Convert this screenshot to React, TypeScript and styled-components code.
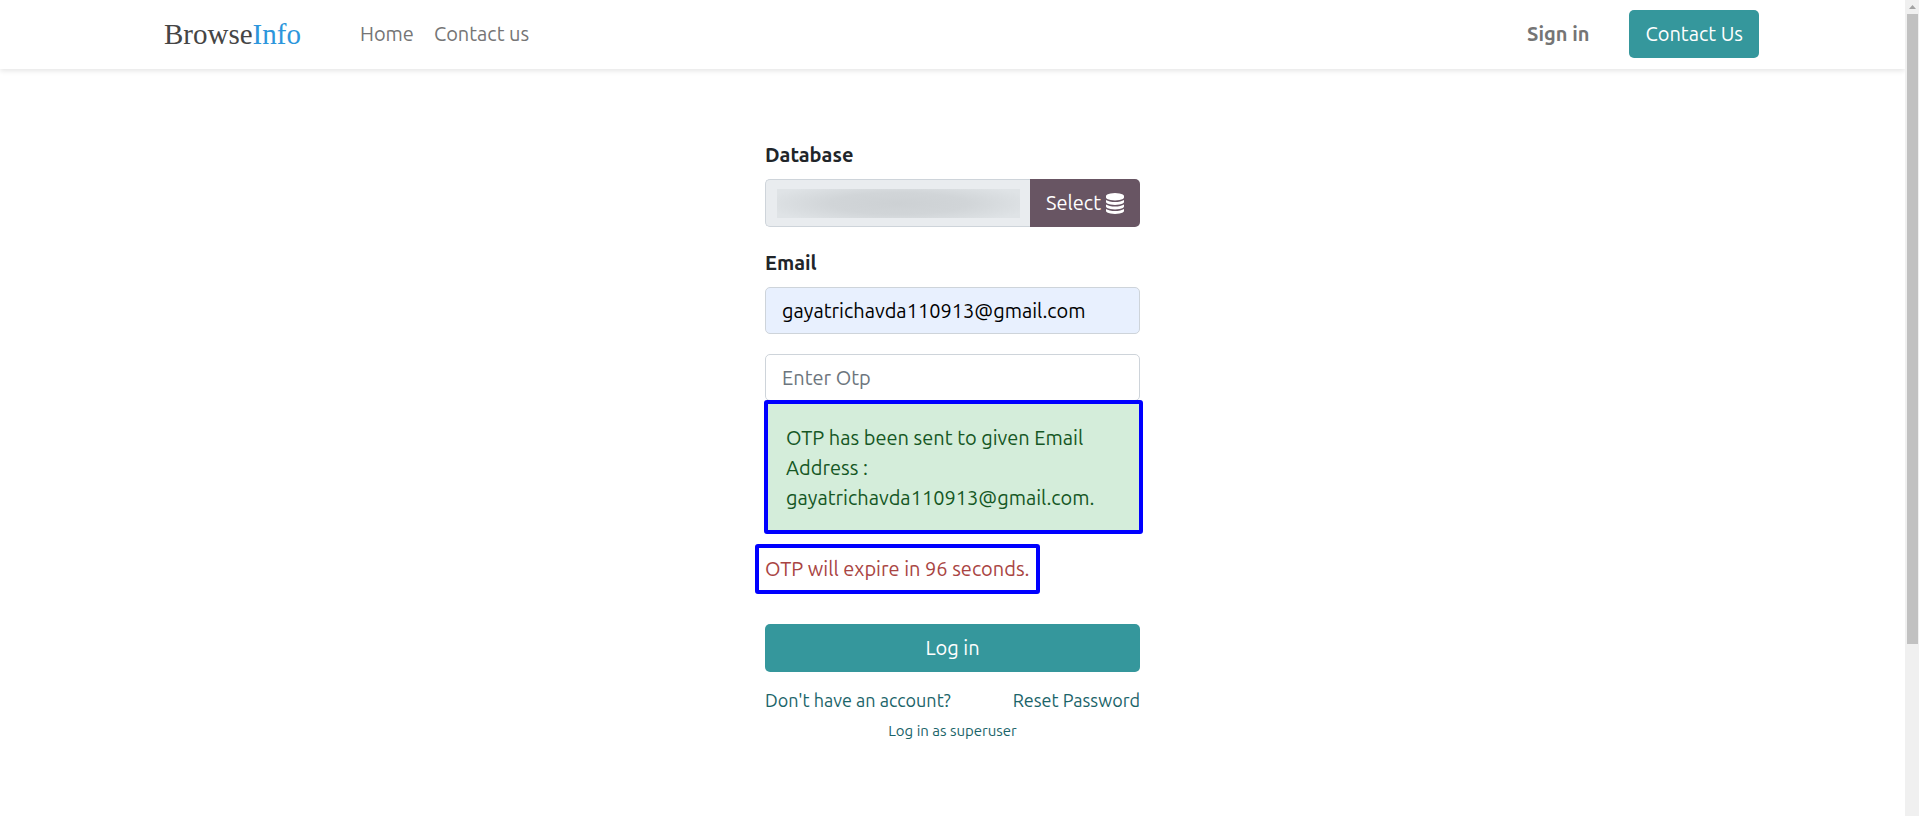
import React, { useState } from "react";
import styled, { createGlobalStyle, css } from "styled-components";

const color = {
  teal: "#35979c",
  tealDark: "#1a6469",
  plum: "#685563",
  border: "#ced4da",
  mark: "#0000ff",
};

const GlobalStyle = createGlobalStyle`
  *, *::before, *::after { box-sizing: border-box; }
  body {
    margin: 0;
    background: #fff;
    color: #212529;
    font: 400 20px/30px "Ubuntu", "Noto Sans", sans-serif;
  }
  button, input { font: inherit; }
`;

const Shell = styled.div`
  display: flex;
  min-height: 100vh;
`;

const Page = styled.div`
  flex: 1;
  min-width: 0;
`;

const Header = styled.header`
  padding: 10px 24px 11px;
  background: #fff;
  box-shadow: 0 2px 5px rgba(0, 0, 0, 0.1);
`;

const HeaderInner = styled.div`
  display: flex;
  align-items: center;
  max-width: 1613px;
  margin: 0 auto;
`;

const Brand = styled.a`
  margin: 0 59px 0 18px;
  color: #454545;
  font: 400 29px/48px "Liberation Serif", serif;
  text-decoration: none;

  span { color: #2d96dc; }
`;

const Nav = styled.nav`
  display: flex;
  flex: 1;
  gap: 20px;
`;

const NavLink = styled.a<{ $strong?: boolean }>`
  color: #757575;
  font-weight: ${(p) => (p.$strong ? 700 : 400)};
  text-decoration: none;
  white-space: nowrap;
`;

const solid = css`
  border: 0;
  border-radius: 5px;
  padding: 9px 16px;
  background: ${color.teal};
  color: #fff;
  text-decoration: none;
  cursor: pointer;
`;

const ContactLink = styled.a`
  ${solid}
  margin-left: 40px;
  white-space: nowrap;
`;

const LoginForm = styled.form`
  width: 375px;
  max-width: calc(100% - 32px);
  margin: 70px auto 40px;
`;

const Field = styled.div`
  margin-bottom: 20px;
`;

const Label = styled.label`
  display: block;
  margin-bottom: 8px;
  font-weight: 700;
  line-height: 32px;
`;

const TextInput = styled.input<{ $filled?: boolean }>`
  display: block;
  width: 100%;
  height: 47px;
  padding: 8px 16px;
  border: 1px solid ${color.border};
  border-radius: 5px;
  background: ${(p) => (p.$filled ? "#e8f0fe" : "#fff")};
  color: ${(p) => (p.$filled ? "#000" : "#495057")};

  &::placeholder { color: #6c757d; opacity: 1; }
`;

const InputGroup = styled.div`
  display: flex;
`;

const DatabaseInput = styled.input`
  flex: 1;
  min-width: 0;
  height: 48px;
  padding: 9px 10px 8px 11px;
  border: 1px solid ${color.border};
  border-right: 0;
  border-radius: 5px 0 0 5px;
  background:
    radial-gradient(ellipse 56% 75% at 50% 50%, #cdd1d4 0%, #d1d5d8 50%, #dfe3e6 100%) content-box,
    #e9ecef;
`;

const SelectButton = styled.button`
  display: flex;
  align-items: center;
  gap: 5px;
  padding: 9px 16px;
  border: 0;
  border-radius: 0 5px 5px 0;
  background: ${color.plum};
  color: #fff;
  cursor: pointer;
`;

const marked = css`
  border: 4px solid ${color.mark};
  border-radius: 3px;
`;

const SentAlert = styled.div`
  ${marked}
  margin: -1px -3px 10px -1px;
  padding: 19px 18px 17px;
  background: #d4edda;
  color: #155724;
  overflow-wrap: anywhere;
`;

const ExpiryNote = styled.p`
  ${marked}
  width: fit-content;
  margin: 0 0 30px -10px;
  padding: 6px;
  color: #a94442;
`;

const LoginButton = styled.button`
  ${solid}
  display: block;
  width: 100%;
`;

const Links = styled.div`
  display: flex;
  justify-content: space-between;
  margin-top: 15px;
  font-size: 18px;
  line-height: 26px;
`;

const FootLink = styled.a`
  color: ${color.tealDark};
  text-decoration: none;
`;

const SuperuserRow = styled.div`
  margin-top: 6px;
  text-align: center;
  font-size: 15px;
  line-height: 24px;
`;

const ScrollTrack = styled.div`
  display: flex;
  flex-direction: column;
  width: 14px;
  height: 100vh;
  padding: 0 1px 0 2px;
  background: #f0f0f0;
`;

const ScrollArrow = styled.svg`
  display: block;
  width: 11px;
  height: 14px;
`;

const ScrollThumb = styled.div`
  height: 77.2%;
  background: #c1c1c1;
`;

function DatabaseIcon() {
  const layer =
    "q237 0 443-43t325-127v170q0 69-103 128t-280 93.5-385 34.5-385-34.5-280-93.5-103-128v-170q119 84 325 127t443 43z";
  return (
    <svg width="18" height="21" viewBox="0 0 1536 1792" fill="currentColor" aria-hidden="true">
      <path
        d={`M768 768${layer}M768 1536${layer}M768 1152${layer}M768 0q208 0 385 34.5t280 93.5 103 128v128q0 69-103 128t-280 93.5-385 34.5-385-34.5-280-93.5-103-128v-128q0-69 103-128t280-93.5 385-34.5z`}
      />
    </svg>
  );
}

export default function App() {
  const [email, setEmail] = useState("gayatrichavda110913@gmail.com");
  const [otp, setOtp] = useState("");

  return (
    <>
      <GlobalStyle />
      <Shell>
        <Page>
          <Header>
            <HeaderInner>
              <Brand href="#">
                Browse<span>Info</span>
              </Brand>
              <Nav>
                <NavLink href="#">Home</NavLink>
                <NavLink href="#">Contact us</NavLink>
              </Nav>
              <NavLink href="#" $strong>
                Sign in
              </NavLink>
              <ContactLink href="#">Contact Us</ContactLink>
            </HeaderInner>
          </Header>
          <main>
            <LoginForm onSubmit={(e) => e.preventDefault()}>
              <Field>
                <Label htmlFor="database">Database</Label>
                <InputGroup>
                  <DatabaseInput id="database" readOnly />
                  <SelectButton type="button">
                    Select
                    <DatabaseIcon />
                  </SelectButton>
                </InputGroup>
              </Field>
              <Field>
                <Label htmlFor="email">Email</Label>
                <TextInput
                  id="email"
                  type="email"
                  $filled
                  spellCheck={false}
                  value={email}
                  onChange={(e) => setEmail(e.target.value)}
                />
              </Field>
              <TextInput
                aria-label="Enter Otp"
                placeholder="Enter Otp"
                value={otp}
                onChange={(e) => setOtp(e.target.value)}
              />
              <SentAlert role="status">
                OTP has been sent to given Email Address : gayatrichavda110913@gmail.com.
              </SentAlert>
              <ExpiryNote>OTP will expire in 96 seconds.</ExpiryNote>
              <LoginButton type="submit">Log in</LoginButton>
              <Links>
                <FootLink href="#">Don't have an account?</FootLink>
                <FootLink href="#">Reset Password</FootLink>
              </Links>
              <SuperuserRow>
                <FootLink href="#">Log in as superuser</FootLink>
              </SuperuserRow>
            </LoginForm>
          </main>
        </Page>
        <ScrollTrack aria-hidden="true">
          <ScrollArrow viewBox="0 0 11 14">
            <path d="M2 9L5.500 5L9 9Z" fill="#a3a3a3" />
          </ScrollArrow>
          <ScrollThumb />
        </ScrollTrack>
      </Shell>
    </>
  );
}
